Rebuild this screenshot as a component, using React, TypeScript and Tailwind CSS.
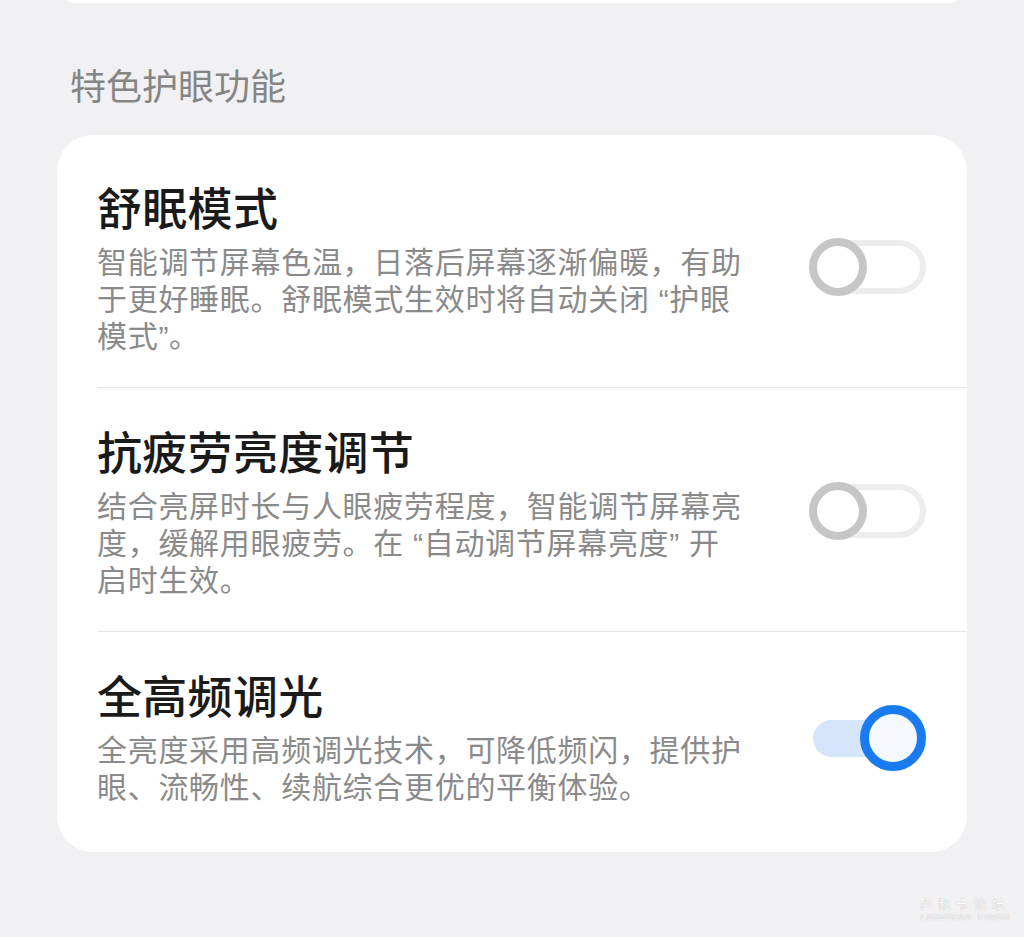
import React from 'react';

type Item = {
  title: string;
  text: string;
  on: boolean;
};

const items: Item[] = [
  {
    title: '舒眠模式',
    text: '智能调节屏幕色温，日落后屏幕逐渐偏暖，有助\n于更好睡眠。舒眠模式生效时将自动关闭 “护眼\n模式”。',
    on: false,
  },
  {
    title: '抗疲劳亮度调节',
    text: '结合亮屏时长与人眼疲劳程度，智能调节屏幕亮\n度，缓解用眼疲劳。在 “自动调节屏幕亮度” 开\n启时生效。',
    on: false,
  },
  {
    title: '全高频调光',
    text: '全亮度采用高频调光技术，可降低频闪，提供护\n眼、流畅性、续航综合更优的平衡体验。',
    on: true,
  },
];

const Toggle: React.FC<{ on: boolean }> = ({ on }) => {
  if (on) {
    return (
      <div className="relative w-[117px] h-[66px] shrink-0">
        <div className="absolute left-[4px] top-[15px] w-[90px] h-[37px] rounded-full bg-[#d4e5fc]" />
        <div className="absolute right-0 top-0 w-[66px] h-[66px] rounded-full border-[9px] border-[#1a7bf0] bg-[#f5f9ff]" />
      </div>
    );
  }
  return (
    <div className="relative w-[117px] h-[66px] shrink-0">
      <div className="absolute left-[2px] top-[5px] w-[115px] h-[54px] rounded-full border-[6px] border-[#ededed] bg-white" />
      <div className="absolute left-0 top-[3px] w-[58px] h-[58px] rounded-full border-[8px] border-[#c6c6c6] bg-white" />
    </div>
  );
};

const Row: React.FC<{ item: Item; first: boolean; last: boolean }> = ({ item, first, last }) => (
  <div
    className={
      'ml-[40px] pr-[41px] flex items-center ' +
      (first ? 'pt-[46px] ' : 'pt-[37px] border-t border-[#e4e4e6] ') +
      (last ? 'pb-[46px]' : 'pb-[32px]')
    }
  >
    <div className="flex-1 flex flex-col gap-[11px]">
      <div className="text-[45px] leading-[52px] font-medium text-[#1a1a1a] tracking-[0.3px]">{item.title}</div>
      <div
        className="text-[30px] leading-[37px] text-[#8a8a8a] tracking-[0.7px] whitespace-pre-line"
        style={{ fontFamily: '"Liberation Sans", "Noto Sans CJK SC", sans-serif' }}
      >
        {item.text}
      </div>
    </div>
    <Toggle on={item.on} />
  </div>
);

export default function App() {
  return (
    <div
      className="relative min-h-screen bg-[#f1f1f3] px-[57px] overflow-hidden"
      style={{ fontFamily: '"Noto Sans CJK SC", "Noto Sans", sans-serif' }}
    >
      <div className="-mt-[37px] h-[40px] rounded-[36px] bg-white" />
      <div className="mt-[59px] ml-[13px] text-[36px] leading-[44px] text-[#858585]">特色护眼功能</div>
      <div className="mt-[29px] rounded-[36px] bg-white">
        {items.map((it, i) => (
          <Row key={it.title} item={it} first={i === 0} last={i === items.length - 1} />
        ))}
      </div>
      <div className="absolute right-[14px] bottom-[12px] flex flex-col items-end text-white leading-[14px] [text-shadow:0_0_1px_#999]">
        <span className="text-[12px] tracking-[6px]">卢比卡论坛</span>
        <span className="text-[9px] tracking-[1px] font-['Liberation_Mono',monospace]">LUOBUCAS FORUM</span>
      </div>
    </div>
  );
}
